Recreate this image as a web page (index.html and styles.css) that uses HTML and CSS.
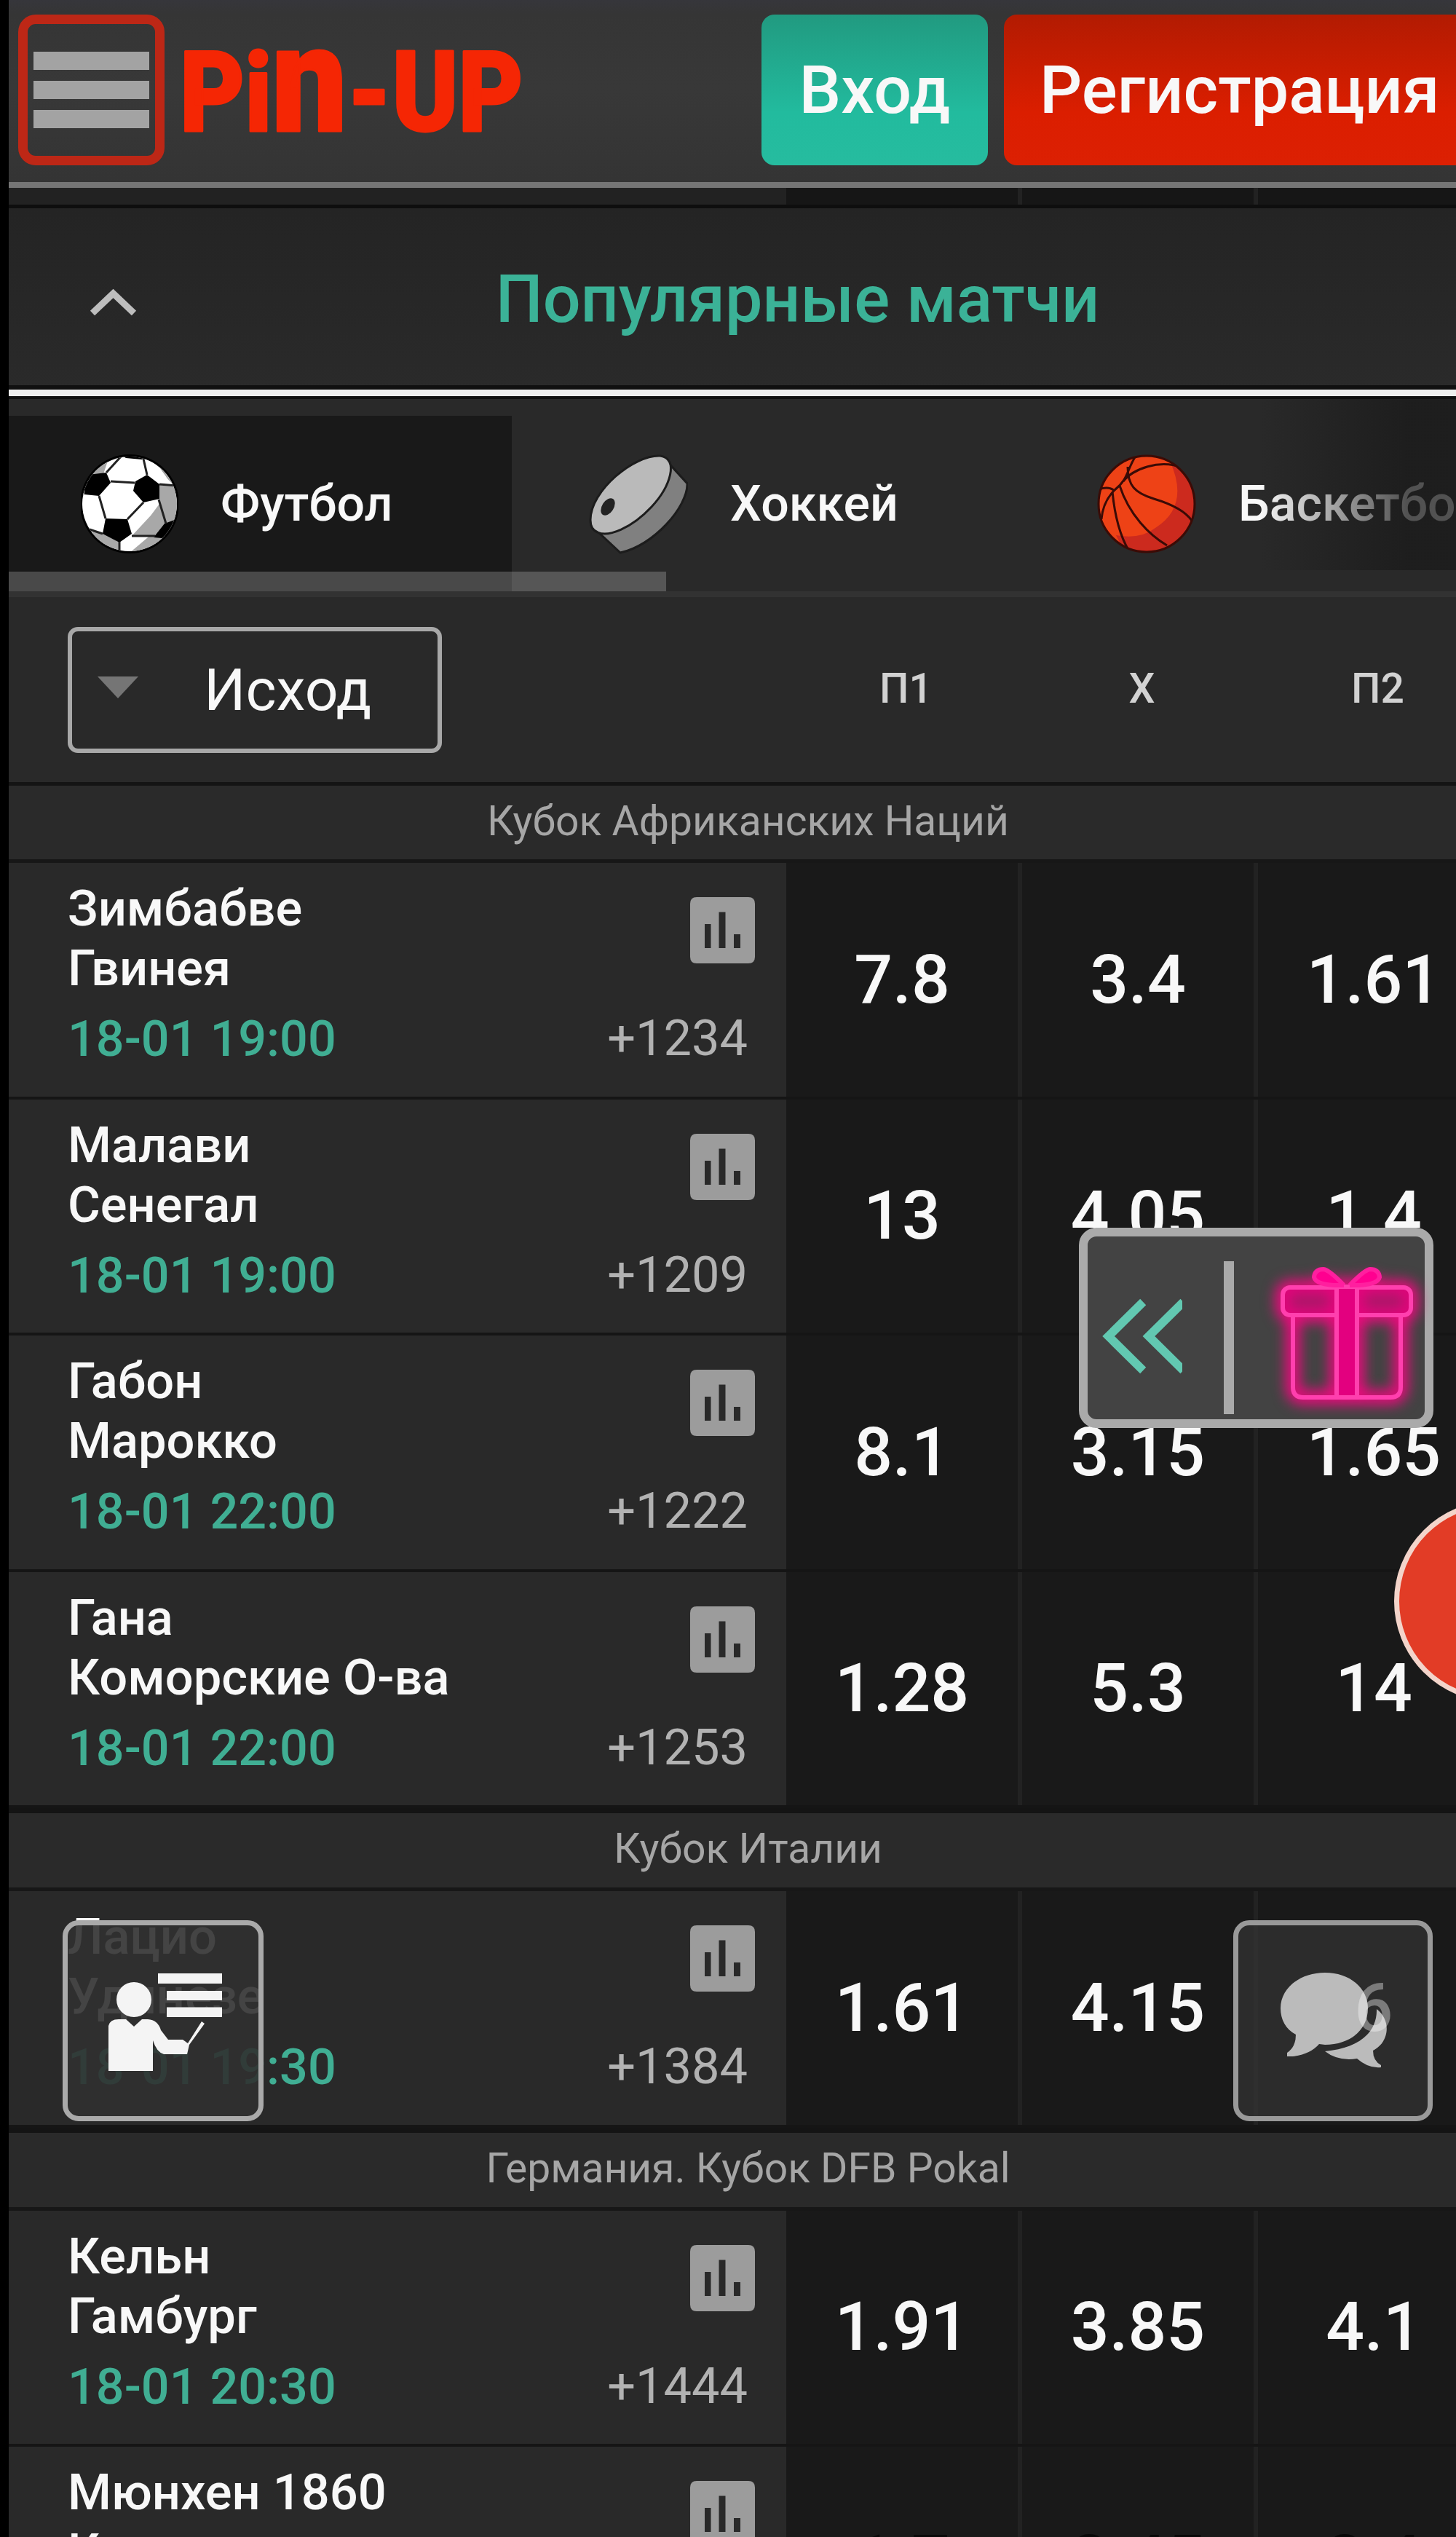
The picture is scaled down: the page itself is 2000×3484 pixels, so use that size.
FILE: index.html
```
<!DOCTYPE html>
<html lang="ru">
  <head>
    <meta charset="UTF-8" />
    <meta name="viewport" content="width=device-width, initial-scale=1.0" />
    <title>PIN-UP</title>

    <link rel="stylesheet" href="styles.css">
  </head>
  <body>
    <!-- shared icon -->
    <svg class="sprite">
      <symbol id="stats" viewBox="0 0 89 91">
        <path fill="#9c9c9c" fill-rule="evenodd" d="M9 0H80Q89 0 89 9V82Q89 91 80 91H9Q0 91 0 82V9Q0 0 9 0ZM20 37V70H28.500V37ZM39.500 20.500V70H48.500V20.500ZM60 51V70H69V51Z" />
      </symbol>
    </svg>

    <div class="page">
      <header class="header">
        <button class="menu-button" aria-label="Меню">
          <span></span>
          <span></span>
          <span></span>
        </button>
        <svg class="logo" width="470" height="130" viewBox="0 0 470 130">
          <text class="logo-text" x="-5" y="120" textLength="472" lengthAdjust="spacingAndGlyphs">P<tspan class="logo-i">i</tspan><tspan class="logo-n">n</tspan>-UP</text>
        </svg>
        <div class="buttons">
          <button class="login-button">Вход</button>
          <button class="signup-button">Регистрация</button>
        </div>
      </header>

      <div class="row-rest">
        <div></div>
        <div></div>
        <div></div>
        <div></div>
      </div>

      <div class="section-title">
        <svg class="caret" width="67" height="42" viewBox="0 0 67 42">
          <path d="M5 36L33.500 9L62 36" fill="none" stroke="#bdbdbd" stroke-width="9" />
        </svg>
        <h1>Популярные матчи</h1>
      </div>

      <nav class="tabs">
        <a class="tab active">
          <svg width="134" height="136" viewBox="0 0 134 136">
            <circle cx="67" cy="68" r="68" fill="#000" />
            <clipPath id="ball"><circle cx="67" cy="68" r="65" /></clipPath>
            <g clip-path="url(#ball)">
              <rect width="134" height="136" fill="#fff" />
              <path fill="#a8a8a8" d="M100 0Q112 30 128 42L108 41L108 64L117 93L66 136H140V0ZM0 60L8 20L40 0L30 30ZM16 104L30 108L53 121V136H20Z" />
              <path fill="#fff" d="M86 7L108 41L122 40Q112 18 92 6ZM86 66L108 68L113 84L70 111L64 89Z" />
              <path fill="#a8a8a8" d="M108 68L117 93L102 112H70L96 84Z" />
              <path d="M10 28L35 25L41 39L25 57L5 55V34ZM91 28L108 41L108 61L86 66L72 50L75 37ZM34 88L64 89L70 109L53 121L30 109ZM115 95L134 88L122 116L100 114ZM54 0L62 5L84 7L92 0Z" />
              <path fill="none" stroke="#222" stroke-width="3" d="M41 37L74 39M25 57L34 88M86 66L64 89M108 41L132 43M86 6L91 28M35 25L56 2M107 62L117 95M70 112H102M53 120V136M12 103L30 109" />
            </g>
          </svg>
          <span>Футбол</span>
        </a>
        <a class="tab">
          <svg width="136" height="140" viewBox="0 0 136 140">
            <path fill="#808080" stroke="#1c1c1c" stroke-width="3" d="M104 8L135 42C136 74 88 128 43 137L12 108Z" />
            <path fill="#bababa" stroke="#1c1c1c" stroke-width="3" d="M2 92C2 52 62 2 98 4C124 8 112 46 86 74C58 104 26 116 12 109C4 106 2 100 2 92Z" />
            <ellipse cx="26" cy="74" rx="8" ry="13" transform="rotate(32 26 74)" fill="#222" />
          </svg>
          <span>Хоккей</span>
        </a>
        <a class="tab">
          <svg width="136" height="138" viewBox="0 0 136 138">
            <clipPath id="basket"><circle cx="68" cy="69" r="66" /></clipPath>
            <g clip-path="url(#basket)">
              <rect width="136" height="138" fill="#ee4216" />
              <path fill="#cc2a1e" d="M100 10Q128 72 80 102Q60 118 26 112L40 140H140V10Z" />
              <path fill="none" stroke="#3a0b06" stroke-width="3" d="M55 0C40 22 44 34 24 50Q8 66 6 90M2 49Q16 44 24 51M118 20C86 6 48 22 36 38M42 18C42 44 52 54 78 62Q118 74 130 92M21 52Q26 104 44 134M31 44C44 84 72 112 96 126" />
            </g>
            <circle cx="68" cy="69" r="66" fill="none" stroke="#3a0b06" stroke-width="3" />
          </svg>
          <span>Баскетбол</span>
        </a>
        <div class="tabs-fade"></div>
        <div class="tabs-scroll"></div>
      </nav>

      <div class="filter">
        <div class="filter-cell">
          <button class="select">
            <span class="select-arrow"></span>
            Исход
          </button>
        </div>
        <div class="outcome">П1</div>
        <div class="outcome">Х</div>
        <div class="outcome">П2</div>
      </div>

      <div class="league first">Кубок Африканских Наций</div>

      <div class="match">
        <div class="match-info">
          <div class="teams">
            <p>Зимбабве</p>
            <p>Гвинея</p>
            <p class="date">18-01 19:00</p>
          </div>
          <div class="extra">
            <svg class="stats"><use href="#stats" /></svg>
            <span>+1234</span>
          </div>
        </div>
        <div class="odd">7.8</div>
        <div class="odd">3.4</div>
        <div class="odd">1.61</div>
      </div>

      <div class="match">
        <div class="match-info">
          <div class="teams">
            <p>Малави</p>
            <p>Сенегал</p>
            <p class="date">18-01 19:00</p>
          </div>
          <div class="extra">
            <svg class="stats"><use href="#stats" /></svg>
            <span>+1209</span>
          </div>
        </div>
        <div class="odd">13</div>
        <div class="odd">4.05</div>
        <div class="odd">1.4</div>
      </div>

      <div class="match">
        <div class="match-info">
          <div class="teams">
            <p>Габон</p>
            <p>Марокко</p>
            <p class="date">18-01 22:00</p>
          </div>
          <div class="extra">
            <svg class="stats"><use href="#stats" /></svg>
            <span>+1222</span>
          </div>
        </div>
        <div class="odd">8.1</div>
        <div class="odd">3.15</div>
        <div class="odd">1.65</div>
      </div>

      <div class="match">
        <div class="match-info">
          <div class="teams">
            <p>Гана</p>
            <p>Коморские О-ва</p>
            <p class="date">18-01 22:00</p>
          </div>
          <div class="extra">
            <svg class="stats"><use href="#stats" /></svg>
            <span>+1253</span>
          </div>
        </div>
        <div class="odd">1.28</div>
        <div class="odd">5.3</div>
        <div class="odd">14</div>
      </div>

      <div class="league">Кубок Италии</div>

      <div class="match">
        <div class="match-info">
          <div class="teams">
            <p>Лацио</p>
            <p>Удинезе</p>
            <p class="date">18-01 19:30</p>
          </div>
          <div class="extra">
            <svg class="stats"><use href="#stats" /></svg>
            <span>+1384</span>
          </div>
        </div>
        <div class="odd">1.61</div>
        <div class="odd">4.15</div>
        <div class="odd">6</div>
      </div>

      <div class="league">Германия. Кубок DFB Pokal</div>

      <div class="match">
        <div class="match-info">
          <div class="teams">
            <p>Кельн</p>
            <p>Гамбург</p>
            <p class="date">18-01 20:30</p>
          </div>
          <div class="extra">
            <svg class="stats"><use href="#stats" /></svg>
            <span>+1444</span>
          </div>
        </div>
        <div class="odd">1.91</div>
        <div class="odd">3.85</div>
        <div class="odd">4.1</div>
      </div>

      <div class="match last">
        <div class="match-info">
          <div class="teams">
            <p>Мюнхен 1860</p>
            <p>Карлсруэ</p>
          </div>
          <div class="extra">
            <svg class="stats"><use href="#stats" /></svg>
          </div>
        </div>
        <div class="odd">1.7</div>
        <div class="odd">3.45</div>
        <div class="odd">3.4</div>
      </div>
    </div>

    <!-- floating buttons -->
    <div class="gift">
      <svg width="112" height="110" viewBox="0 0 112 110">
        <path d="M60 8L11 55L60 102M117 8L68 55L117 102" transform="scale(.97 1)" fill="none" stroke="#62c8b1" stroke-width="12" />
      </svg>
      <span class="gift-line"></span>
      <svg class="gift-icon" width="184" height="186" viewBox="0 0 184 186">
        <g class="glow">
          <rect x="4" y="29" width="176" height="38" rx="10" />
          <path d="M18 68V166Q18 180 32 180H152Q166 180 166 166V68M78 28H106V180H78ZM92 27Q52 25 48 16M92 27Q132 25 136 16" />
        </g>
        <rect x="4" y="29" width="176" height="38" rx="10" fill="#e0007c" fill-opacity=".6" stroke="#ff3fae" stroke-width="6" />
        <path d="M78 28H106V180H78Z" fill="#e3007f" stroke="#ff3fae" stroke-width="6" />
        <path d="M18 68V166Q18 180 32 180H152Q166 180 166 166V68" fill="none" stroke="#ff3fae" stroke-width="6" />
        <path d="M88 26Q50 27 47 15Q48 4 60 4Q68 5 88 26M96 26Q134 27 137 15Q136 4 124 4Q116 5 96 26" fill="#ff0090" stroke="#ff1f9f" stroke-width="6" />
      </svg>
    </div>

    <div class="circle"></div>

    <div class="float-button guide">
      <svg width="156" height="136" viewBox="0 0 156 136">
        <path fill="#f4f4f4" d="M68 0H156V14H68ZM80 24H156V37H80ZM80 46.500H156V60H80Z" />
        <ellipse cx="35" cy="36" rx="24" ry="24" fill="#f4f4f4" />
        <path fill="#f4f4f4" d="M0 72Q2 63 14 63H24L35 73L46 63H54Q68 64 72 78L82 91H102L109 96L128 66L132 69L111 98L108 111H76Q66 108 61 92V134H0Z" />
      </svg>
    </div>

    <div class="float-button chat">
      <svg width="152" height="132" viewBox="0 0 152 132">
        <g fill="#fff" fill-opacity=".68">
          <path d="M62 0C96 0 121 21 121 49C121 79 96 99 62 99L54 98Q42 112 18 115L10 115V110Q22 102 22 85C8 78 1 64 1 49C1 21 28 0 62 0Z" />
          <path d="M133 50C154 66 150 96 128 107Q128 121 139 127V130Q122 132 106 118Q80 122 62 108C106 104 134 84 133 50Z" />
        </g>
      </svg>
    </div>
  </body>
</html>
```
FILE: styles.css
```
* {
  box-sizing: border-box;
}

body {
  margin: 0;
  height: 3484px;
  overflow: hidden;
  position: relative;
  background: #000;
  color: #f8f8f8;
  font-family: Roboto, "Liberation Sans", sans-serif;
  font-weight: 500;
}

p,
h1 {
  margin: 0;
}

button {
  border: none;
  padding: 0;
  background: none;
  color: inherit;
  font: inherit;
}

.sprite {
  position: absolute;
  width: 0;
  height: 0;
}

.page {
  width: 2038px;
  height: 3484px;
  overflow: hidden;
  margin-left: 12px;
  background: #292929;
}

/* header */
.header {
  display: flex;
  align-items: flex-start;
  height: 258px;
  padding: 20px 0 0 13px;
  background: linear-gradient(#36363b, #353535 20px, #383838 120px, #343434);
  border-bottom: 8px solid #757575;
}

.menu-button {
  display: flex;
  flex: none;
  flex-direction: column;
  justify-content: center;
  gap: 15px;
  width: 201px;
  height: 207px;
  padding: 0 8px;
  border: 13px solid #bd2716;
  border-radius: 24px;
}

.menu-button span {
  height: 25px;
  background: #a3a3a3;
}

.logo {
  flex: none;
  margin: 40px 0 0 26px;
  overflow: visible;
}

.logo-text {
  font-family: Roboto, sans-serif;
  font-size: 154px;
  font-weight: 900;
  fill: #f52604;
  stroke: #f52604;
  stroke-width: 3;
  stroke-linejoin: round;
}

.logo-i {
  font-size: 150px;
}

.logo-n {
  font-size: 206px;
}

.buttons {
  display: flex;
  flex: none;
  gap: 22px;
  margin-left: 324px;
}

.login-button,
.signup-button {
  height: 207px;
  border-radius: 18px;
  font-size: 91.5px;
}

.login-button {
  width: 311px;
  background: linear-gradient(#219a80, #22bb9e 65%, #26bc9f);
}

.signup-button {
  width: 680px;
  padding-left: 49px;
  text-align: left;
  background: linear-gradient(#b21b02, #db1e00 65%, #dc2003);
}

/* grid shared by table rows */
.row-rest,
.filter,
.match {
  display: grid;
  grid-template-columns: 1068px 324px 324px 324px;
}

.row-rest {
  height: 28px;
  background: #161616;
  border-bottom: 5px solid #0e0e0e;
}

.row-rest div:first-child {
  background: #222;
}

.row-rest div:nth-child(2),
.row-rest div:nth-child(3) {
  border-right: 6px solid #222;
}

.section-title {
  display: flex;
  align-items: center;
  height: 258px;
  padding: 0 48px 0 110px;
  background: linear-gradient(#242424, #2a2a2a);
  border-bottom: 9px solid #eee;
  box-shadow: inset 0 -6px #101010;
}

.section-title h1 {
  flex: 1;
  text-align: center;
  font-size: 91.5px;
  font-weight: 500;
  color: #3bb297;
}

.caret {
  margin-top: 8px;
}

/* sport tabs */
.tabs {
  display: flex;
  gap: 7px;
  position: relative;
  height: 276px;
  padding-top: 23px;
  border-top: 4px solid #101010;
  border-bottom: 8px solid #323232;
}

.tab {
  display: flex;
  flex: none;
  align-items: center;
  width: 691px;
  padding-left: 99px;
  font-size: 68px;
}

.tab svg {
  flex: none;
  margin-right: 58px;
}

.tab.active {
  background: #191919;
}

.tabs-fade {
  position: absolute;
  top: 0;
  right: 50px;
  width: 270px;
  height: 235px;
  background: linear-gradient(to right, rgba(26, 26, 26, 0), rgba(26, 26, 26, 0.75) 75%);
}

.tabs-scroll {
  position: absolute;
  left: 0;
  bottom: 0;
  width: 903px;
  height: 27px;
  background: rgba(255, 255, 255, 0.21);
}

/* filter */
.filter {
  align-items: center;
  height: 254px;
}

.filter-cell {
  padding-left: 81px;
}

.select {
  display: flex;
  align-items: center;
  width: 514px;
  height: 173px;
  border: 6px solid #a8a8a8;
  border-radius: 14px;
  font-size: 80.5px;
  font-weight: 400;
}

.select-arrow {
  margin: -6px 90px 0 35px;
  border: 28px solid transparent;
  border-top: 30px solid #757575;
  border-bottom: 0;
}

.outcome {
  padding: 0 0 4px 5px;
  text-align: center;
  font-size: 57px;
  color: #d2d2d2;
}

/* matches */
.league {
  height: 114px;
  padding: 0 7px 4px 0;
  border-top: 7px solid #141414;
  border-bottom: 5px solid #171717;
  background: #2a2a2a;
  line-height: 98px;
  text-align: center;
  font-size: 57px;
  font-weight: 400;
  color: #a6a6a6;
}

.league.first {
  height: 111px;
  border-top-width: 5px;
}

.match {
  height: 324.5px;
  border-bottom: 4px solid #151515;
}

.match-info {
  display: flex;
  justify-content: space-between;
  padding: 22px 43px 0 81px;
  background: #292929;
}

.teams p {
  line-height: 82px;
  font-size: 68.6px;
}

.teams .date {
  margin-top: 15px;
  font-size: 68.3px;
  color: #40ae93;
}

.extra {
  display: flex;
  flex-direction: column;
  align-items: flex-end;
  padding-top: 25px;
}

.stats {
  width: 89px;
  height: 91px;
}

.extra span {
  margin-top: 60px;
  padding-right: 10px;
  line-height: 86px;
  font-size: 68.5px;
  font-weight: 400;
  color: #b2b2b2;
}

.odd {
  display: flex;
  align-items: center;
  justify-content: center;
  background: #191919;
  border-right: 6px solid #222;
  font-size: 93px;
}

.match.last .odd {
  padding-bottom: 10px;
  color: #080808;
}

/* floating buttons */
.gift {
  position: absolute;
  top: 1686px;
  left: 1482px;
  display: flex;
  align-items: center;
  width: 487px;
  height: 275px;
  padding-left: 18px;
  border: 12px solid #aaa;
  border-radius: 24px;
  background: #434343;
}

.gift-line {
  width: 14px;
  height: 210px;
  margin: 26px 63px 0 57px;
  background: #aaa;
}

.gift svg {
  flex: none;
  margin-top: 22px;
}

.gift .gift-icon {
  margin-top: 16px;
  overflow: visible;
}

.glow {
  fill: none;
  stroke: #f0087f;
  stroke-width: 20;
  filter: blur(9px);
}

.circle {
  position: absolute;
  top: 2061px;
  left: 1915px;
  width: 276px;
  height: 276px;
  border: 7px solid #f3d4ca;
  border-radius: 50%;
  background: #e23c26;
}

.float-button {
  position: absolute;
  top: 2637px;
  height: 276px;
  border: 7px solid #aaa;
  border-radius: 22px;
}

.guide {
  left: 86px;
  width: 276px;
  padding: 66px 0 0 56px;
  background: rgba(48, 48, 48, 0.9);
}

.chat {
  left: 1694px;
  width: 274px;
  padding: 65px 0 0 57px;
  border-color: #999;
  background: rgba(55, 55, 55, 0.65);
}
```
